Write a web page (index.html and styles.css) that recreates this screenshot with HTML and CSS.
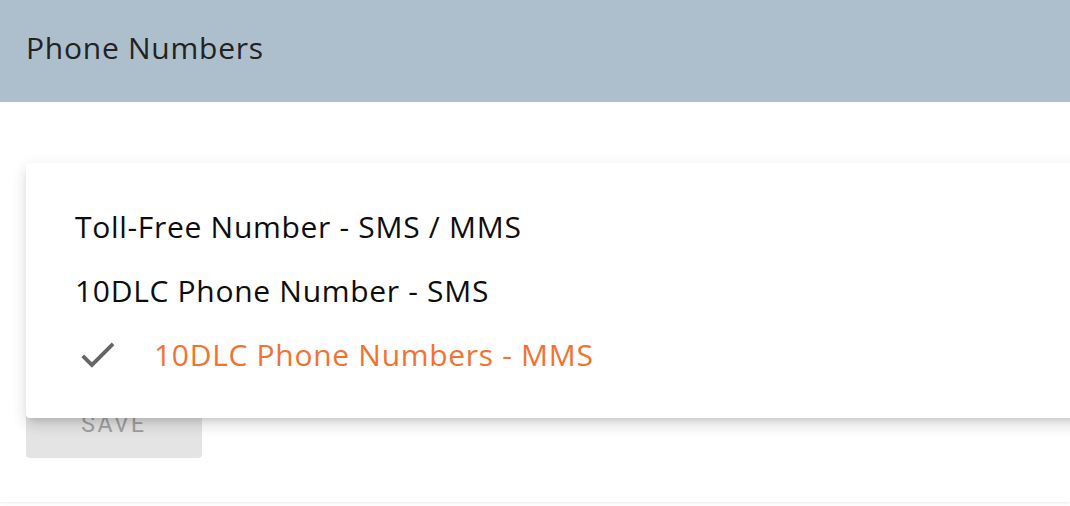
FILE: index.html
```html
<!DOCTYPE html>
<html lang="en">
<head>
<meta charset="utf-8">
<title>Phone Numbers</title>
<link rel="stylesheet" href="styles.css">
</head>
<body>
<div class="card">
  <header class="card-header">
    <h1 class="card-title">Phone Numbers</h1>
  </header>
  <div class="card-body">
    <div class="select-field"></div>
    <button class="save-btn" type="button" disabled>SAVE</button>
    <ul class="menu">
      <li class="menu-item">Toll-Free Number - SMS / MMS</li>
      <li class="menu-item">10DLC Phone Number - SMS</li>
      <li class="menu-item selected">
        <svg class="check" viewBox="0 0 24 24" width="45" height="45" aria-hidden="true"><path d="M9 16.17L4.83 12l-1.42 1.41L9 19 21 7l-1.41-1.41z" fill="#666"/></svg>
        <span>10DLC Phone Numbers - MMS</span>
      </li>
    </ul>
  </div>
</div>
</body>
</html>
```

FILE: styles.css
```css
html, body {
  margin: 0;
  padding: 0;
  overflow: hidden;
  background: #fff;
}

body {
  font-family: "Open Sans", "DejaVu Sans", sans-serif;
  width: 1070px;
  height: 506px;
}

.card {
  height: 502px;
  background: #fff;
  box-shadow: 0 1px 3px rgba(0, 0, 0, 0.08);
  overflow: hidden;
}

.card-header {
  height: 102px;
  box-sizing: border-box;
  background: #adbfcd;
  display: flex;
  align-items: center;
  padding: 0 26px 8px;
}

.card-title {
  margin: 0;
  font-weight: 400;
  font-size: 30px;
  color: #222;
  letter-spacing: 0.75px;
}

.card-body {
  position: relative;
  padding: 40px 26px 0;
}

.select-field {
  height: 248px;
}

.save-btn {
  display: block;
  width: 176px;
  height: 68px;
  border: none;
  border-radius: 4px;
  background: #e4e4e4;
  color: #a0a0a0;
  font-family: Roboto, "Liberation Sans", sans-serif;
  font-weight: 400;
  font-size: 23px;
  letter-spacing: 2.5px;
  padding: 0;
}

.menu {
  position: absolute;
  top: 61px;
  left: 26px;
  width: 1100px;
  margin: 0;
  padding: 31px 0 32px;
  list-style: none;
  background: #fff;
  border-radius: 4px;
  box-shadow: 0 5px 6px -3px rgba(0,0,0,0.12), 0 9px 14px 1px rgba(0,0,0,0.07), 0 3px 16px 2px rgba(0,0,0,0.06);
}

.menu-item {
  height: 64px;
  display: flex;
  align-items: center;
  padding: 0 49px;
  font-size: 30px;
  letter-spacing: 0.7px;
  color: #0d0d0d;
  white-space: nowrap;
}

.menu-item.selected {
  color: #f27232;
  gap: 34px;
}

.check {
  flex: none;
}
```
